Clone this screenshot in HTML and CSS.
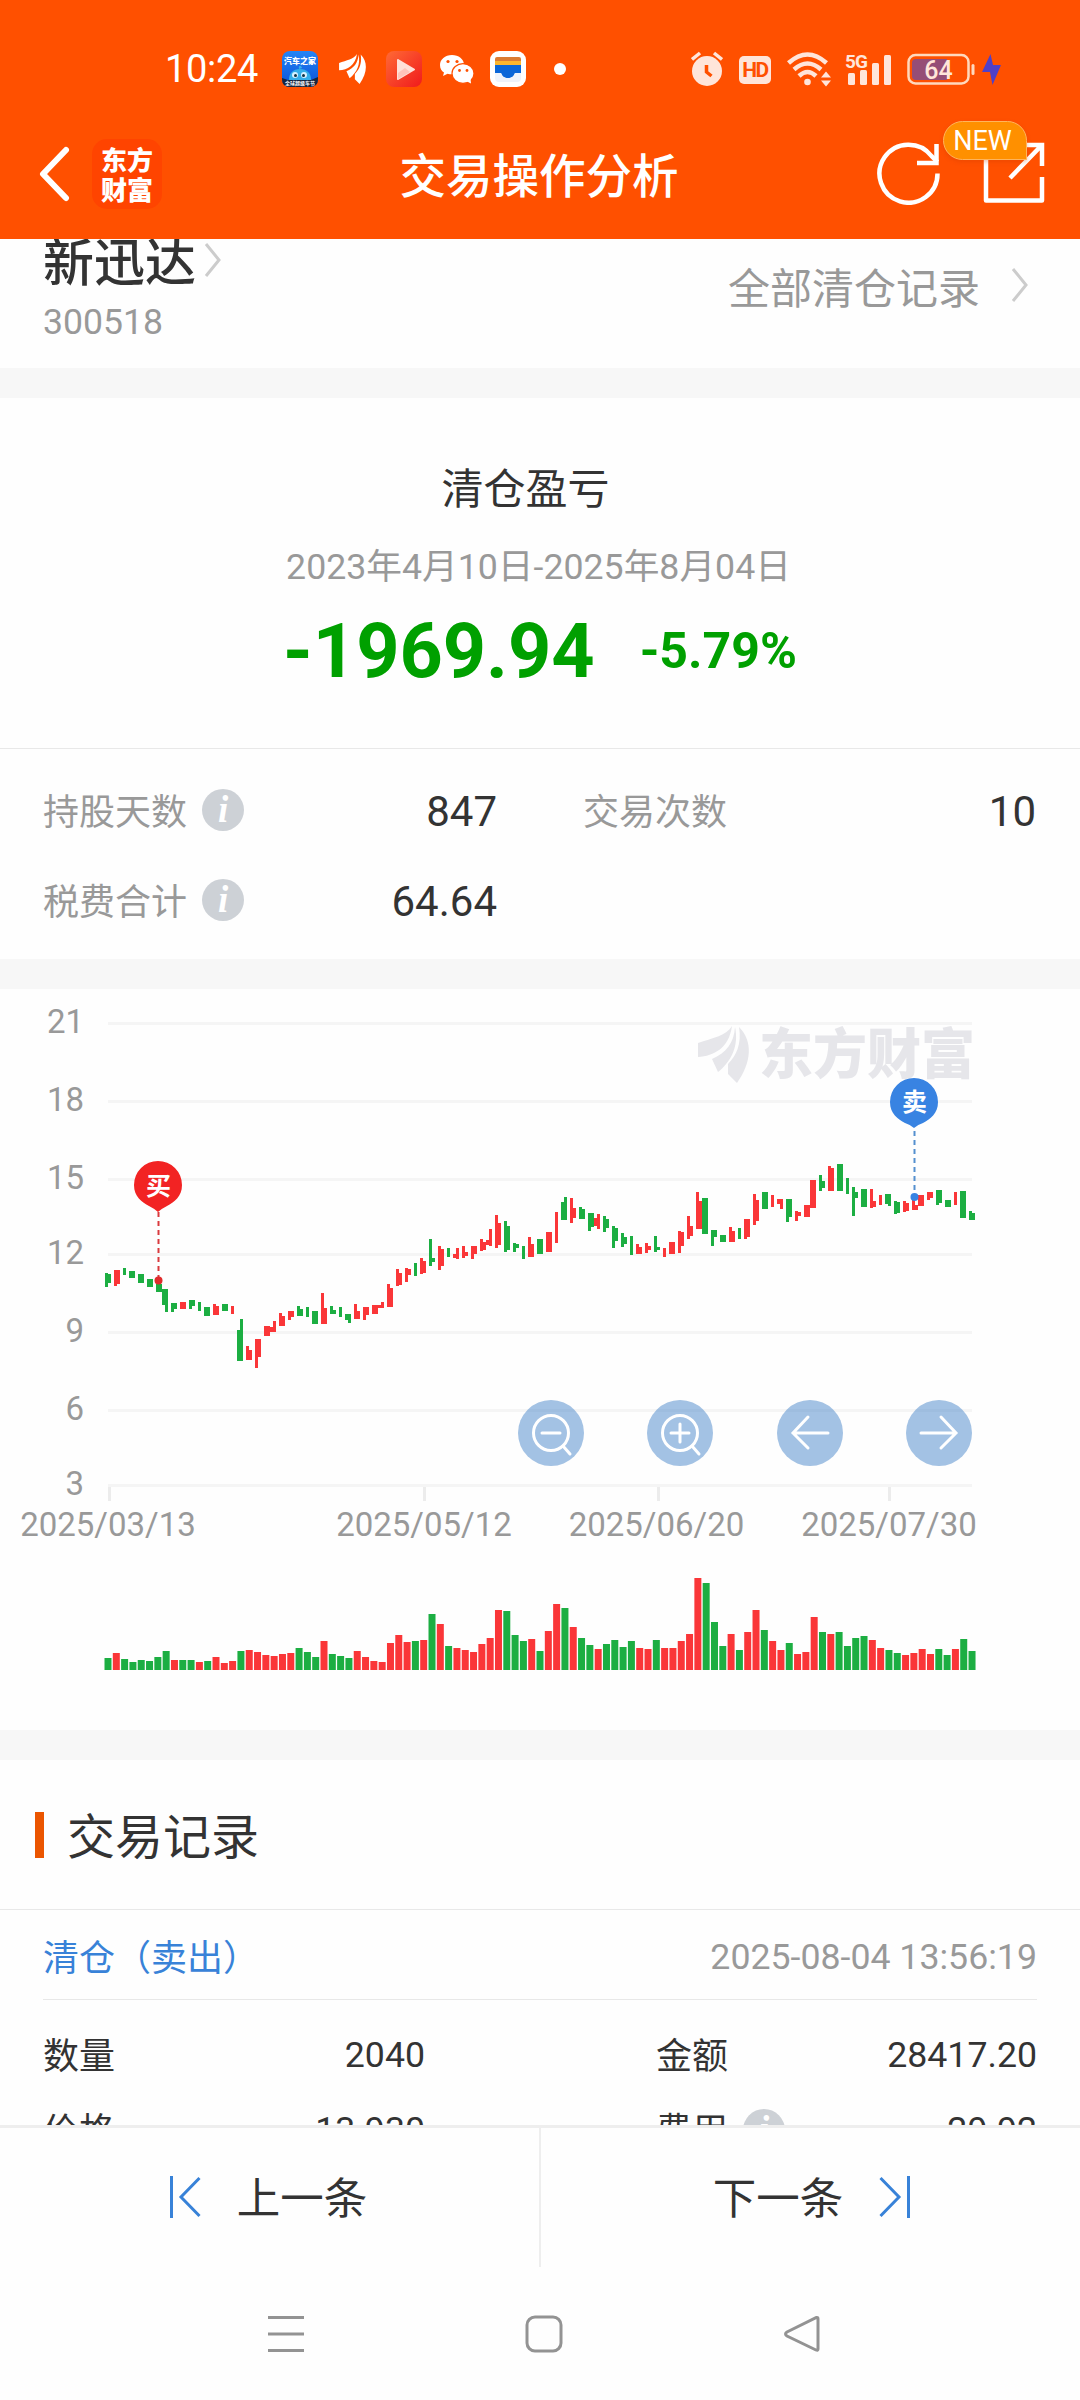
FILE: index.html
```html
<!DOCTYPE html>
<html lang="zh-CN">
<head>
    <meta charset="UTF-8">
    <meta name="viewport" content="width=device-width, initial-scale=1.0">
    <title>交易操作分析</title>
    <link rel="stylesheet" href="styles.css">
</head>
<body>

    <header class="header">
        <div class="status-bar">
            <div class="status-left">
                <span class="time">10:24</span>
                <svg class="app-icon" width="36" height="36" viewBox="0 0 36 36">
                    <defs>
                        <linearGradient id="car-bg" x1="0" y1="0" x2="0" y2="1">
                            <stop offset="0" stop-color="#2585f5"/>
                            <stop offset="1" stop-color="#0b50d8"/>
                        </linearGradient>
                    </defs>
                    <rect width="36" height="36" rx="8" fill="url(#car-bg)"/>
                    <path d="M7 29c0-7 4-11 11-11s11 4 11 11z" fill="#35aee8"/>
                    <path d="M17 18c-1-4 2-4 3-1z" fill="#35aee8"/>
                    <circle cx="13" cy="24" r="3" fill="#d9f2ff"/><circle cx="22" cy="24" r="3" fill="#d9f2ff"/>
                    <circle cx="13.5" cy="24.500" r="1.500" fill="#134"/><circle cx="21.500" cy="24.500" r="1.500" fill="#134"/>
                    <path d="M0 27l6 2h23l7-3v2q0 8-8 8H8q-8 0-8-8z" fill="#17263f"/>
                    <text x="18" y="13" class="tiny-title">汽车之家</text>
                    <text x="18" y="34.300" class="tiny-sub">全球超级车节</text>
                </svg>
                <svg class="app-wing" width="27" height="30" viewBox="0 0 51 57" fill="#fff">
                    <path d="M34 0C28 10 14 12 0 17v14C16 30 31 22 34 0z"/>
                    <path d="M37 1c-1 16-9 26-23 32l6 13C34 35 41 19 37 1z"/>
                    <path d="M41 1c3 17-3 29-11 37v10l9 9C54 36 55 15 41 1z"/>
                </svg>
                <svg class="app-video" width="36" height="36" viewBox="0 0 36 36">
                    <defs>
                        <linearGradient id="video-bg" x1="0" y1="0" x2="1" y2="1">
                            <stop offset="0" stop-color="#ff6a35"/>
                            <stop offset="1" stop-color="#f01a1c"/>
                        </linearGradient>
                    </defs>
                    <rect width="36" height="36" rx="8" fill="url(#video-bg)"/>
                    <path d="M12 9l16 9.500L12 28z" fill="#ffe0d8" stroke="#ffe0d8" stroke-width="2" stroke-linejoin="round"/>
                    <path d="M12 22l7-5 5 4-12 7z" fill="#ffc4bb"/>
                </svg>
                <svg class="app-wechat" width="34" height="30" viewBox="0 0 34 30">
                    <path d="M12 1C5 1 0 5.500 0 11c0 3.500 1.500 6 4 7.500L3 22l4.500-2.200c1.500.4 3 .5 4.500.5 6.500 0 12-4 12-9.600S18.500 1 12 1z" fill="#fff"/>
                    <ellipse cx="23" cy="19.500" rx="11" ry="9.800" fill="#fff" stroke="#ff5000" stroke-width="1.200"/>
                    <path d="M26 27l5 2.500-.5-5z" fill="#fff"/>
                    <g fill="#ff5000">
                        <circle cx="8" cy="7.500" r="1.600"/><circle cx="17" cy="7.500" r="1.600"/>
                        <circle cx="19.500" cy="16.500" r="1.400"/><circle cx="27" cy="16.500" r="1.400"/>
                    </g>
                </svg>
                <svg class="app-wallet" width="36" height="36" viewBox="0 0 36 36">
                    <rect width="36" height="36" rx="9" fill="#fff"/>
                    <path d="M5 8q0-2 2-2h22q2 0 2 2v3H5z" fill="#dc7c33"/>
                    <path d="M5 10h26v4H5z" fill="#fdb62d"/>
                    <path d="M5 14h26v8h-6c-1 3-3 5-7 5s-6-2-7-5H5z" fill="#0a66d8"/>
                    <path d="M5 22h6c1 3 3 5 7 5s6-2 7-5h6v5q0 4-4 4H9q-4 0-4-4z" fill="#eef3fb"/>
                </svg>
                <span class="more-dot"></span>
            </div>
            <div class="status-right">
                <svg width="32" height="36" viewBox="0 0 32 36">
                    <circle cx="16" cy="20" r="15" fill="#ffe5da"/>
                    <path d="M1 8.500l8-6.500M31 8.500L23 2" stroke="#ffe5da" stroke-width="3.500"/>
                    <path d="M15.500 14v7l5 4" fill="none" stroke="#ff5000" stroke-width="3.500"/>
                </svg>
                <span class="hd">HD</span>
                <svg class="wifi" width="45" height="36" viewBox="0 0 45 36">
                    <g fill="none" stroke="#ffe5da" stroke-width="4.500">
                        <path d="M1.500 12Q20.500-5 39.500 12"/>
                        <path d="M7 18.500Q20.500 6.500 34 18.500"/>
                        <path d="M12 25Q20.500 17 29 25"/>
                    </g>
                    <circle cx="20.500" cy="31" r="3.300" fill="#ffe5da"/>
                    <path d="M34 26.500l5-6 5 6zM34 29.500l5 6 5-6z" fill="#ffe5da"/>
                </svg>
                <svg class="signal" width="48" height="34" viewBox="0 0 48 34">
                    <text x="0" y="16" class="net">5G</text>
                    <g fill="#ffe5da">
                        <rect x="3" y="21" width="7" height="12" rx="1.500"/>
                        <rect x="15" y="18" width="7" height="15" rx="1.500"/>
                        <rect x="27" y="11" width="7" height="22" rx="1.500"/>
                        <rect x="39" y="3" width="7" height="30" rx="1.500"/>
                    </g>
                </svg>
                <svg class="battery" width="96" height="34" viewBox="0 0 96 34">
                    <rect x="1.500" y="3" width="60" height="28.500" rx="7" fill="none" stroke="#ffd9bd" stroke-width="2.500"/>
                    <path d="M9 7h31v21H9q-4 0-4-4V11q0-4 4-4z" fill="#954d76"/>
                    <rect x="64.500" y="12" width="3" height="11" rx="1.500" fill="#ffd9bd"/>
                    <text x="31.500" y="26.500" class="level">64</text>
                    <path d="M83.500 2L75 20h8l2.500 13L94 13h-8z" fill="#5040c8"/>
                </svg>
            </div>
        </div>

        <div class="nav-bar">
            <svg class="back" width="34" height="56" viewBox="0 0 34 56">
                <path d="M28 4L5 28l23 24" fill="none" stroke="#fff" stroke-width="6" stroke-linecap="round" stroke-linejoin="round"/>
            </svg>
            <div class="brand">东方<br>财富</div>
            <h1 class="title">交易操作分析</h1>
            <div class="nav-actions">
                <svg width="64" height="64" viewBox="0 0 64 64" fill="none" stroke="#fff" stroke-width="4.500">
                    <path d="M60.500 32.500A29 29 0 1 1 54.500 15l6 6"/>
                    <path d="M59.500 3v19H40"/>
                </svg>
                <svg class="share" width="64" height="64" viewBox="0 0 64 64" fill="none" stroke="#fff" stroke-width="4.500">
                    <path d="M34 4H4v55.500h56V36" stroke-linejoin="round"/>
                    <path d="M42 4h18v21M59 5L28 37"/>
                </svg>
                <span class="badge">NEW</span>
            </div>
        </div>
    </header>

    <section class="stock">
        <div>
            <div class="stock-name">新迅达<svg width="18" height="36" viewBox="0 0 18 36"><path d="M2 2l13 16L2 34" fill="none" stroke="#ccc" stroke-width="3"/></svg></div>
            <div class="stock-code">300518</div>
        </div>
        <div class="all-records">全部清仓记录<svg width="18" height="36" viewBox="0 0 18 36"><path d="M2 2l13 16L2 34" fill="none" stroke="#ccc" stroke-width="3"/></svg></div>
    </section>

    <section class="profit">
        <h2>清仓盈亏</h2>
        <p class="range">2023年4月10日-2025年8月04日</p>
        <div class="amounts">
            <span class="amount">-1969.94</span>
            <span class="percent">-5.79%</span>
        </div>
    </section>

    <section class="stats">
        <div class="stat"><span class="label">持股天数</span><i class="info">i</i><span class="value">847</span></div>
        <div class="stat"><span class="label">交易次数</span><span class="value">10</span></div>
        <div class="stat"><span class="label">税费合计</span><i class="info">i</i><span class="value">64.64</span></div>
    </section>

    <section class="chart">
        <svg id="chart" width="1080" height="741" viewBox="0 989 1080 741">
            <g fill="#e6e6ea" transform="translate(698 1026)">
                <path d="M34 0C28 10 14 12 0 17v14C16 30 31 22 34 0z"/>
                <path d="M37 1c-1 16-9 26-23 32l6 13C34 35 41 19 37 1z"/>
                <path d="M41 1c3 17-3 29-11 37v10l9 9C54 36 55 15 41 1z"/>
            </g>
            <text x="759" y="1074" class="watermark">东方财富</text>
            <g id="grid"></g>
            <g id="candles" shape-rendering="crispEdges"></g>
            <g id="volume"></g>
            <g class="pin">
                <path d="M158.500 1212V1278" stroke="#d93a3e" stroke-width="2" stroke-dasharray="5 4"/>
                <circle cx="158.500" cy="1280.500" r="4" fill="#e02b2b"/>
                <path d="M158 1161a24 24 0 0 1 24 24c0 12-8 17-15 21q-6 3-9 6q-3-3-9-6c-7-4-15-9-15-21a24 24 0 0 1 24-24z" fill="#f22323"/>
                <text x="158.500" y="1194.500">买</text>
            </g>
            <g class="pin">
                <path d="M914.500 1131V1193" stroke="#5590cf" stroke-width="2" stroke-dasharray="5 4"/>
                <circle cx="914.500" cy="1197" r="4" fill="#3883e2"/>
                <path d="M914 1078a24 24 0 0 1 24 24c0 12-8 17-15 21q-6 2-9 5q-3-3-9-5c-7-4-15-9-15-21a24 24 0 0 1 24-24z" fill="#3883e2"/>
                <text x="914.500" y="1110.500">卖</text>
            </g>
        </svg>
        <div class="chart-tools">
            <button><svg width="66" height="66" viewBox="0 0 66 66"><circle cx="33" cy="33" r="17.500"/><path d="M24 33h18M45 46l7 8"/></svg></button>
            <button><svg width="66" height="66" viewBox="0 0 66 66"><circle cx="33" cy="33" r="17.500"/><path d="M24 33h18M33 24v18M45 46l7 8"/></svg></button>
            <button><svg width="66" height="66" viewBox="0 0 66 66"><path d="M51 33H16M31 17L16 33l15 15"/></svg></button>
            <button><svg width="66" height="66" viewBox="0 0 66 66"><path d="M15 33h35M35 17l15 16-15 15"/></svg></button>
        </div>
    </section>

    <section class="records">
        <h2>交易记录</h2>
        <div class="record-head">
            <span class="record-type">清仓（卖出）</span>
            <span class="record-time">2025-08-04 13:56:19</span>
        </div>
        <div class="record-grid">
            <div class="cell"><span class="name">数量</span><span class="num">2040</span></div>
            <div class="cell"><span class="name">金额</span><span class="num">28417.20</span></div>
            <div class="cell"><span class="name">价格</span><span class="num">13.930</span></div>
            <div class="cell"><span class="name">费用</span><i class="info">i</i><span class="num">29.92</span></div>
        </div>
    </section>

    <footer class="footer">
        <div class="pager">
            <div class="page-btn">
                <svg width="32" height="44" viewBox="0 0 32 44"><path d="M2.500 1v42M30.500 3L12 22l18.500 19"/></svg>
                <span>上一条</span>
            </div>
            <div class="page-btn">
                <span>下一条</span>
                <svg width="32" height="44" viewBox="0 0 32 44"><path d="M29.500 1v42M1.500 3L20 22 1.500 41"/></svg>
            </div>
        </div>
        <div class="system-nav">
            <svg width="40" height="40" viewBox="0 0 40 40"><path d="M2 3.500h36M2 20h36M2 36.500h36"/></svg>
            <svg width="40" height="40" viewBox="0 0 40 40"><rect x="3" y="3" width="34" height="34" rx="8"/></svg>
            <svg width="40" height="40" viewBox="0 0 40 40"><path d="M34.500 3.500Q36 3 36 5v30q0 2-2 1L5 22q-3-2 0-4z"/></svg>
        </div>
    </footer>

    <script src="chart.js"></script>
</body>
</html>
```

FILE: chart.js
```js
const NS = "http://www.w3.org/2000/svg";
const RED = "#fa3638";
const GREEN = "#1cae42";

// each candle: color, then x,y,w,h for its body and wick
const candles = `
g 105,1273,3,14 108,1274,3,9|r 114,1270,6,14 114,1270,3,16|g 123,1268,3,7|g 129,1271,6,7|g 138,1274,6,9
g 147,1279,6,8|g 156,1284,6,8|g 162,1289,6,16 165,1289,3,23|g 171,1303,6,6 171,1303,3,9|r 180,1302,6,7
g 189,1300,6,6 189,1300,3,9|g 198,1302,3,9|g 204,1307,6,9|r 213,1304,3,11 216,1306,3,9|g 222,1304,6,7
r 231,1306,3,8|g 237,1330,6,31 240,1319,3,42|r 246,1346,3,14 249,1350,3,10|r 255,1339,6,18 255,1339,3,29
r 264,1326,6,10|r 270,1327,3,5 273,1321,3,11|r 279,1313,3,13 282,1316,3,10|r 288,1311,6,6 288,1311,3,9
g 297,1306,3,10 300,1309,3,7|g 306,1307,3,10|g 312,1311,6,13|r 321,1293,3,31 324,1308,3,16
g 330,1306,3,8 333,1310,3,4|g 339,1307,3,10|g 345,1314,6,6 348,1314,3,9|r 354,1304,3,15 357,1311,3,8
r 363,1307,6,8 363,1307,3,13|r 372,1305,6,9|r 378,1305,3,3 381,1302,3,6|r 387,1284,3,23 390,1288,3,19
r 396,1269,3,17 399,1273,3,12|r 405,1268,3,14 408,1269,3,6|g 414,1263,3,13|r 420,1258,3,16 423,1261,3,12
g 429,1239,3,27 432,1258,3,4|r 438,1246,3,24 441,1249,3,17|g 447,1248,3,9|r 453,1254,3,4 456,1248,3,11
r 462,1246,3,12 465,1252,3,4|r 471,1246,6,8 471,1246,3,13|r 480,1239,3,12 483,1242,3,8|r 486,1240,3,5 489,1229,3,17
r 495,1215,3,33 498,1223,3,22|g 504,1221,3,31 507,1226,3,24|g 513,1243,3,9 516,1244,3,4|g 522,1246,3,13
r 528,1237,3,20 531,1244,3,13|g 537,1239,6,15|r 546,1232,6,20|r 555,1212,3,31|g 561,1202,6,18 564,1197,3,23
r 570,1198,3,25 573,1208,3,10|g 579,1207,3,12 582,1209,3,10|g 588,1213,6,14 588,1213,3,18|r 594,1218,3,8 597,1214,3,15
g 603,1216,3,16 606,1219,3,9|g 612,1226,3,22 615,1228,3,13|g 621,1233,3,14 624,1237,3,7|g 630,1236,3,19
r 636,1244,3,10 639,1247,3,7|r 645,1243,3,10 648,1246,3,4|g 654,1236,3,16 657,1247,3,3|r 663,1248,3,9|r 669,1242,6,12
r 678,1231,3,22 681,1232,3,14|r 687,1216,3,23 690,1226,3,10|r 696,1192,3,37 699,1201,3,28|g 702,1198,6,36
g 711,1230,6,7 711,1230,3,16|g 720,1235,6,7|r 729,1227,3,15 732,1231,3,11|g 738,1228,3,11|r 744,1219,6,18 744,1219,3,20
r 753,1194,3,31 756,1200,3,21|g 762,1192,6,17|r 771,1195,3,12|r 777,1199,6,5 780,1199,3,10|g 786,1199,6,18 786,1199,3,23
r 795,1211,3,10 798,1212,3,4|r 804,1205,6,12|r 810,1180,6,28|g 819,1175,3,16 822,1181,3,7|r 828,1166,3,25 831,1168,3,23
g 837,1164,6,27|g 846,1178,3,16|g 852,1187,3,29 855,1192,3,6|g 861,1189,6,18|r 870,1189,3,19 873,1201,3,6|r 879,1195,3,10
g 885,1194,6,10 888,1194,3,12|g 894,1201,3,13 897,1202,3,11|r 903,1201,3,11 906,1203,3,8|r 912,1200,3,10 915,1205,3,5
r 918,1195,6,11|r 927,1192,6,6 927,1192,3,8|g 936,1190,6,13 936,1190,3,15|g 945,1200,6,7|r 954,1192,3,13|g 960,1191,6,27
g 969,1211,3,9 969,1213,6,7`;

const volume = "12g 17r 11g 8g 10g 9g 13g 19g 10r 10g 10g 8r 9g 13r 7r 9r 19g 20r 18r 15r 14r 16r 17r 22g 18g 13g 29r 16g 14g 12g " +
    "19r 13r 9r 8r 27r 35r 28r 29g 30r 56g 46r 24g 22r 20r 18r 26r 32r 60r 59g 35g 29g 31r 19g 39r 66r 62g 43r 32g 25g 21r " +
    "26g 30g 23g 29g 22r 21r 30g 22r 22r 29r 36r 92r 87g 48g 24g 36r 20g 38r 60r 40g 29r 20r 27g 16r 18r 53r 38g 36r 38g 24g " +
    "32g 34g 30r 22r 20g 17g 15r 17r 21r 16r 21g 15g 21r 31g 19g";

const yAxis = [[21, 1023.5], [18, 1101.5], [15, 1179.5], [12, 1254.5], [9, 1332.5], [6, 1410.5], [3, 1485.5]];
const xAxis = [["2025/03/13", 109, 108], ["2025/05/12", 424, 424], ["2025/06/20", 658, 656.5], ["2025/07/30", 889, 889]];

function add(parent, tag, attrs, text) {
    const el = document.createElementNS(NS, tag);
    for (const key in attrs) el.setAttribute(key, attrs[key]);
    if (text) el.textContent = text;
    document.getElementById(parent).appendChild(el);
}

yAxis.forEach(([label, y]) => {
    add("grid", "rect", { x: 108, y: y - 1.5, width: 864, height: 3, fill: "#f5f5f5" });
    add("grid", "text", { x: 84, y: y + 9, class: "axis", "text-anchor": "end" }, label);
});

xAxis.forEach(([label, tick, x]) => {
    add("grid", "rect", { x: tick - 1, y: 1487, width: 3, height: 14, fill: "#ececec" });
    add("grid", "text", { x: x, y: 1535.5, class: "axis", "text-anchor": "middle" }, label);
});

candles.trim().split(/[|\n]/).forEach(item => {
    const [color, ...rects] = item.split(" ");
    rects.forEach(r => {
        const [x, y, width, height] = r.split(",");
        add("candles", "rect", { x, y, width, height, fill: color === "r" ? RED : GREEN });
    });
});

volume.split(" ").forEach((v, i) => {
    const h = parseInt(v);
    add("volume", "rect", { x: 104.5 + i * 8.308, y: 1670 - h, width: 7, height: h, fill: v.endsWith("r") ? RED : GREEN });
});
```

FILE: styles.css
```css
* {
    box-sizing: border-box;
}
body {
    margin: 0;
    width: 1080px;
    height: 2400px;
    overflow: hidden;
    display: flex;
    flex-direction: column;
    background: #fefefe;
    color: #333;
    font-family: Roboto, "Noto Sans CJK SC", sans-serif;
    font-size: 36px;
}
h1, h2, p { margin: 0; font-weight: 400; }
svg { display: block; flex: none; }

/* Header */
.header {
    position: relative;
    z-index: 1;
    height: 239px;
    flex: none;
    background: #ff5000;
    color: #fff;
}
.status-bar {
    display: flex;
    justify-content: space-between;
    height: 105px;
    padding: 32px 77px 0 165px;
}
.status-left, .status-right {
    display: flex;
    align-items: center;
    height: 74px;
}
.time { width: 117px; font-size: 38px; letter-spacing: -0.3px; }
.app-wing { margin-left: 21px; }
.app-video { margin-left: 20px; }
.app-wechat { margin-left: 18px; }
.app-wallet { margin-left: 16px; }
.more-dot { width: 12px; height: 12px; margin-left: 28px; border-radius: 50%; background: #fff; }
.tiny-title { font: 900 8px "Noto Sans CJK SC", sans-serif; fill: #fff; text-anchor: middle; }
.tiny-sub { font: 700 5px "Noto Sans CJK SC", sans-serif; fill: #fff; text-anchor: middle; }
.hd {
    width: 32px;
    height: 28px;
    margin: 2px 0 0 16px;
    border-radius: 5px;
    background: #ffe5da;
    color: #ff5000;
    font: 700 21px/29px Roboto, sans-serif;
    letter-spacing: -1.5px;
    text-align: center;
}
.wifi { margin-left: 16px; }
.signal { margin-left: 13px; overflow: visible; }
.battery { margin-left: 14px; }
.net { font: 700 19px Roboto, sans-serif; fill: #ffe5da; letter-spacing: -1px; }
.level { font: 500 25px Roboto, sans-serif; fill: #ffe5da; text-anchor: middle; }

.nav-bar {
    display: flex;
    align-items: center;
    justify-content: space-between;
    position: relative;
    height: 134px;
    padding: 0 34px 0 38px;
}
.back { margin-top: 3px; }
.brand {
    width: 70px;
    height: 70px;
    margin: 3px auto 0 20px;
    padding-top: 5px;
    border-radius: 15px;
    background: #ff4400;
    font: 900 26px/30px "Noto Sans CJK SC", sans-serif;
    text-align: center;
}
.title {
    position: absolute;
    left: 0;
    right: 2px;
    text-align: center;
    font-size: 46.5px;
    font-weight: 500;
    line-height: 60px;
    padding-top: 9px;
}
.nav-actions { display: flex; gap: 41px; position: relative; margin-top: 1px; }
.badge {
    position: absolute;
    left: 66px;
    top: -20px;
    width: 84px;
    height: 39px;
    border: 1px solid #ffb45c;
    border-radius: 20px 20px 0 20px;
    background: #ff9000;
    box-shadow: 0 2px 4px rgba(200, 60, 0, 0.3);
    font-size: 27px;
    line-height: 38px;
    text-align: center;
    padding-right: 5px;
}

/* Stock name */
.stock {
    display: flex;
    justify-content: space-between;
    flex: none;
    height: 159px;
    padding: 0 51px 0 43px;
    border-bottom: 30px solid #f7f7f7;
}
.stock-name {
    display: flex;
    align-items: center;
    gap: 8px;
    height: 50px;
    font-size: 51px;
    font-weight: 500;
    line-height: 60px;
}
.stock-name svg { margin-top: -8px; }
.stock-code { margin-top: 12px; color: #999; font-size: 35.6px; line-height: 42px; }
.all-records { display: flex; align-items: center; gap: 31px; height: 92px; color: #999; font-size: 42px; }

/* Profit */
.profit {
    height: 351px;
    flex: none;
    border-bottom: 1px solid #e8e8e8;
    text-align: center;
}
.profit h2 { padding: 67px 29px 0 0; font-size: 42px; line-height: 50px; }
.range { margin-top: 30px; color: #999; font-size: 35.7px; line-height: 44px; padding-right: 3px; }
.amounts {
    display: flex;
    justify-content: center;
    align-items: center;
    gap: 45px;
    margin-top: 17px;
    color: #00a000;
    font-weight: 700;
    line-height: 90px;
}
.amount { font-size: 75.5px; }
.percent { font-size: 50px; }

/* Stats */
.stats {
    display: grid;
    grid-template-columns: 454px 453px;
    grid-auto-rows: 90px;
    column-gap: 86px;
    flex: none;
    height: 240px;
    padding: 16px 43px 0;
    border-bottom: 30px solid #f7f7f7;
}
.stat, .cell { display: flex; align-items: center; }
.label { color: #999; margin-top: -2px; }
.value { margin-left: auto; padding-top: 2px; font-size: 42px; }
.info {
    width: 42px;
    height: 42px;
    margin-left: 15px;
    border-radius: 50%;
    background: #cdd1d6;
    color: #fff;
    font: italic 700 37px/41px "Liberation Serif", serif;
    text-align: center;
}

/* Chart */
.chart {
    position: relative;
    flex: none;
    height: 771px;
    border-bottom: 30px solid #f7f7f7;
}
.axis { font-size: 33px; fill: #999; }
.watermark { font: 900 54px "Noto Sans CJK SC", sans-serif; fill: #e6e6ea; }
.pin text { font: 700 25px "Noto Sans CJK SC", sans-serif; fill: #fff; text-anchor: middle; }
.chart-tools {
    position: absolute;
    top: 411px;
    left: 518px;
    width: 454px;
    display: flex;
    justify-content: space-between;
}
.chart-tools button {
    padding: 0;
    border: none;
    border-radius: 50%;
    background: rgba(72, 133, 201, 0.5);
}
.chart-tools svg { fill: none; stroke: #fff; stroke-width: 3; stroke-linecap: round; }

/* Records */
.records { height: 365px; flex: none; overflow: hidden; }
.records h2 {
    display: flex;
    align-items: center;
    height: 150px;
    border-bottom: 1px solid #e8e8e8;
    padding: 0 0 3px 35px;
    font-size: 48px;
}
.records h2::before { content: ""; width: 9px; height: 46px; margin: 3px 23px 0 0; background: #eb5500; }
.record-head {
    display: flex;
    justify-content: space-between;
    align-items: center;
    height: 90px;
    margin: 0 43px;
    border-bottom: 1px solid #e8e8e8;
}
.record-type { color: #3882d8; }
.record-time { color: #999; font-size: 35.7px; padding-top: 4px; }
.record-grid {
    display: grid;
    grid-template-columns: 382px 381px;
    justify-content: space-between;
    grid-auto-rows: 75px;
    padding: 17px 43px 0;
}
.name { margin-top: -4px; }
.num { margin-left: auto; font-size: 35.7px; }

/* Bottom */
.footer { flex: none; height: 275px; background: #fefefe; }
.pager { display: flex; height: 142px; border-top: 3px solid #eee; }
.page-btn {
    display: flex;
    align-items: center;
    justify-content: center;
    gap: 36px;
    flex: 1;
    font-size: 43.5px;
    padding-bottom: 1px;
}
.page-btn:first-child { border-right: 2px solid #eee; padding-right: 3px; }
.page-btn:last-child { padding-left: 3px; }
.page-btn span { margin-top: -3px; }
.page-btn svg { fill: none; stroke: #3882d8; stroke-width: 3; }
.system-nav { display: flex; justify-content: space-between; padding: 47px 258px 0 266px; }
.system-nav svg { fill: none; stroke: #939393; stroke-width: 3; }
```
